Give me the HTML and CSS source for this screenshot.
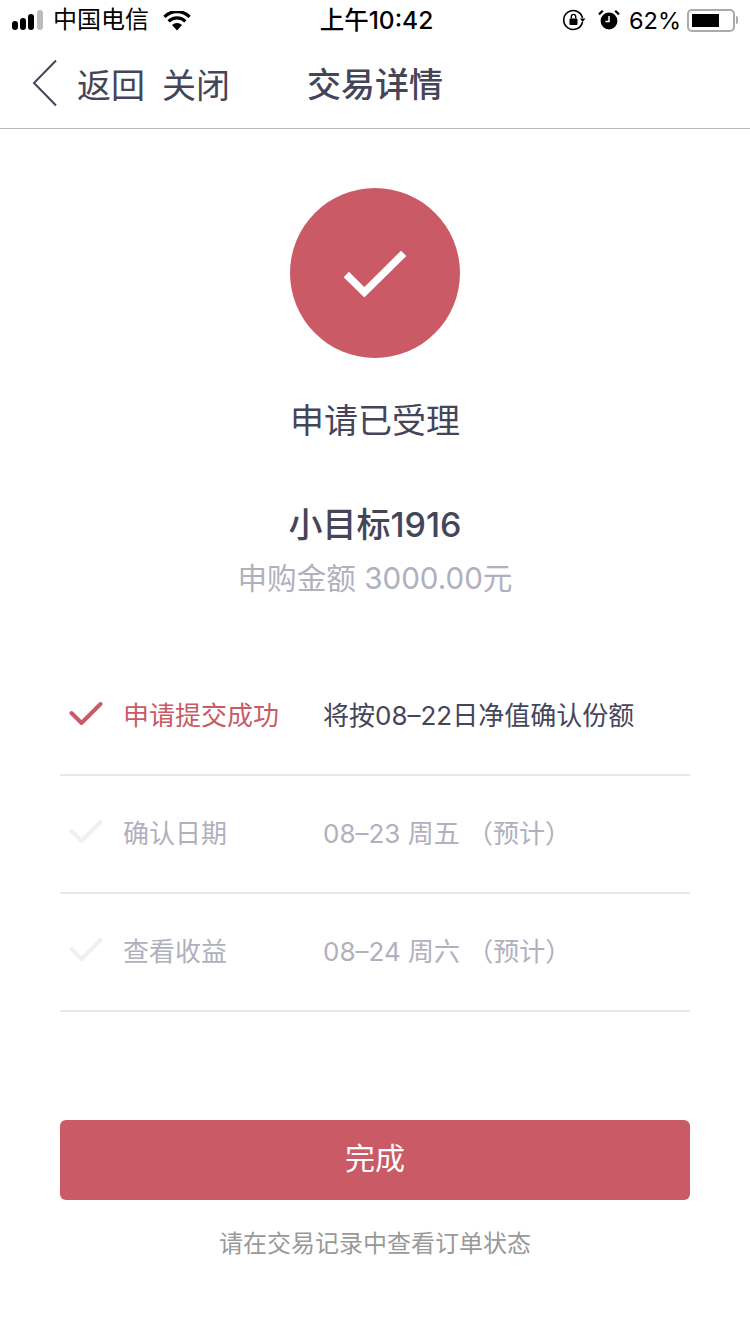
FILE: index.html
```html
<!DOCTYPE html>
<html lang="zh-CN">
<head>
    <meta charset="UTF-8">
    <title>交易详情</title>
    <link rel="stylesheet" href="styles.css">
</head>
<body>
    <div class="status-bar">
        <div class="status-left">
            <div class="signal">
                <span class="dot dot-1"></span>
                <span class="dot dot-2"></span>
                <span class="dot dot-3"></span>
                <span class="dot dot-4"></span>
            </div>
            <span class="carrier">中国电信</span>
            <svg class="wifi" width="28" height="20" viewBox="0 0 28 20">
                <path d="M14 19.500 L9 14 A7.500 7.500 0 0 1 19 14 Z" fill="#000"/>
                <path d="M5.600 10.400 A12 12 0 0 1 22.400 10.400" fill="none" stroke="#000" stroke-width="3.200"/>
                <path d="M1.400 5.800 A18 18 0 0 1 26.600 5.800" fill="none" stroke="#000" stroke-width="3.200"/>
            </svg>
        </div>
        <div class="status-time">上午10:42</div>
        <div class="status-right">
            <svg class="lock" width="24" height="24" viewBox="0 0 24 24">
                <path d="M20.500 14 A9.500 9.500 0 1 1 20.500 10" fill="none" stroke="#000" stroke-width="1.600"/>
                <path d="M18 10.500 L23.500 10.500 L20.600 14 Z" fill="#000"/>
                <rect x="7.500" y="10.500" width="8" height="6.500" rx="1" fill="#000"/>
                <path d="M9.300 10.500 V8.600 A2.200 2.200 0 0 1 13.700 8.600 V10.500" fill="none" stroke="#000" stroke-width="1.400"/>
            </svg>
            <svg class="alarm" width="22" height="22" viewBox="0 0 22 22">
                <circle cx="11" cy="12" r="8.400" fill="#000"/>
                <path d="M11 7 V12.400 H7.400" fill="none" stroke="#fff" stroke-width="1.500"/>
                <path d="M1 5.400 L4.800 1.800 M21 5.400 L17.200 1.800" stroke="#000" stroke-width="2.200"/>
            </svg>
            <span class="battery-text">62%</span>
            <div class="battery"><div class="battery-level"></div></div>
            <div class="battery-tip"></div>
        </div>
    </div>

    <div class="nav-bar">
        <svg class="back-icon" width="26" height="48" viewBox="0 0 26 48">
            <path d="M24 1.500 L2 24 L24 46.500" fill="none" stroke="#45455a" stroke-width="2"/>
        </svg>
        <span class="nav-link">返回</span>
        <span class="nav-link nav-close">关闭</span>
        <h1 class="nav-title">交易详情</h1>
    </div>

    <div class="result-head">
        <div class="success-circle">
            <svg width="64" height="50" viewBox="0 0 64 50">
                <path d="M3.300 26.500 L21.300 44.300 L60.700 5.300" fill="none" stroke="#fff" stroke-width="7.500"/>
            </svg>
        </div>
        <div class="result-text">申请已受理</div>
        <div class="product-name">小目标1916</div>
        <div class="product-amount">申购金额 3000.00元</div>
    </div>

    <div class="steps">
        <div class="step step-done">
            <svg class="step-icon" width="34" height="26" viewBox="0 0 34 26">
                <path d="M2.500 12 L12.500 22 L31.500 3" fill="none" stroke="#c95a66" stroke-width="4" stroke-linecap="round" stroke-linejoin="round"/>
            </svg>
            <span class="step-name">申请提交成功</span>
            <span class="step-info">将按08–22日净值确认份额</span>
        </div>
        <div class="step">
            <svg class="step-icon" width="34" height="26" viewBox="0 0 34 26">
                <path d="M2.500 12 L12.500 22 L31.500 3" fill="none" stroke="#f0f0f0" stroke-width="4" stroke-linecap="round" stroke-linejoin="round"/>
            </svg>
            <span class="step-name">确认日期</span>
            <span class="step-info">08–23 周五 （预计）</span>
        </div>
        <div class="step">
            <svg class="step-icon" width="34" height="26" viewBox="0 0 34 26">
                <path d="M2.500 12 L12.500 22 L31.500 3" fill="none" stroke="#f0f0f0" stroke-width="4" stroke-linecap="round" stroke-linejoin="round"/>
            </svg>
            <span class="step-name">查看收益</span>
            <span class="step-info">08–24 周六 （预计）</span>
        </div>
    </div>

    <button class="done-btn">完成</button>
    <p class="tip">请在交易记录中查看订单状态</p>
</body>
</html>
```

FILE: styles.css
```css
* {
    margin: 0;
    padding: 0;
    box-sizing: border-box;
}

body {
    width: 750px;
    height: 1334px;
    overflow: hidden;
    background: #fff;
    font-family: Inter, "Noto Sans CJK SC", sans-serif;
    color: #45455a;
}

/* 状态栏 */
.status-bar {
    height: 40px;
    display: flex;
    align-items: center;
    justify-content: space-between;
    color: #000;
    font-size: 24px;
    position: relative;
}

.status-left {
    display: flex;
    align-items: center;
    padding-left: 12px;
}

.signal {
    display: flex;
    align-items: flex-end;
    gap: 2px;
    width: 34px;
    height: 20px;
    margin-top: -1px;
}

.dot {
    width: 6px;
    background: #000;
    border-radius: 3px;
}

.dot-1 { height: 9px; }
.dot-2 { height: 12px; }
.dot-3 { height: 16px; }
.dot-4 { height: 20px; background: #bbb; margin-left: 1px; }

.carrier {
    margin-left: 7px;
    line-height: 40px;
}

.wifi {
    margin-left: 14px;
    margin-top: 2px;
}

.status-time {
    position: absolute;
    left: 0;
    right: 0;
    padding-left: 3px;
    text-align: center;
    font-size: 24.5px;
    font-weight: 500;
    line-height: 40px;
    pointer-events: none;
}

.status-right {
    display: flex;
    align-items: center;
    padding-right: 12px;
}

.alarm {
    margin-left: 12px;
}

.battery-text {
    margin-left: 9px;
    font-size: 23.5px;
}

.battery {
    width: 48px;
    height: 23px;
    margin-left: 6px;
    padding: 3px;
    border: 2px solid #aaa;
    border-radius: 5px;
}

.battery-level {
    width: 27px;
    height: 100%;
    background: #000;
}

.battery-tip {
    width: 2px;
    height: 8px;
    margin-left: 1px;
    background: #aaa;
    border-radius: 0 2px 2px 0;
}

/* 导航栏 */
.nav-bar {
    height: 89px;
    display: flex;
    align-items: center;
    position: relative;
    border-bottom: 1px solid #b8b8b8;
    padding-left: 32px;
    padding-bottom: 3px;
}

.back-icon {
    flex: none;
}

.nav-link {
    font-size: 34px;
    line-height: 40px;
    margin-left: 19px;
    margin-top: 6px;
}

.nav-close {
    margin-left: 17px;
}

.nav-title {
    position: absolute;
    left: 0;
    right: 0;
    top: 0;
    text-align: center;
    font-size: 34px;
    font-weight: 500;
    line-height: 90px;
}

/* 结果 */
.result-head {
    display: flex;
    flex-direction: column;
    align-items: center;
    padding-top: 59px;
}

.success-circle {
    width: 170px;
    height: 170px;
    border-radius: 50%;
    background: #c95a66;
    display: flex;
    align-items: center;
    justify-content: center;
}

.result-text {
    font-size: 34px;
    line-height: 44px;
    margin-top: 41px;
}

.product-name {
    font-size: 34px;
    font-weight: 500;
    line-height: 46px;
    margin-top: 59px;
}

.product-amount {
    font-size: 29.6px;
    line-height: 40px;
    margin-top: 10px;
    color: #b0b0be;
}

/* 步骤 */
.steps {
    margin: 60px 60px 0;
}

.step {
    height: 118px;
    display: flex;
    align-items: center;
    border-bottom: 2px solid #e6e6ee;
    padding-bottom: 6px;
    font-size: 26px;
    color: #b0b0be;
}

.step-icon {
    flex: none;
    margin-left: 9px;
    margin-top: 2px;
}

.step-name {
    width: 200px;
    margin-left: 20px;
}

.step-info {
    white-space: nowrap;
}

.step-done .step-name {
    color: #c95a66;
}

.step-done .step-info {
    color: #45455a;
}

/* 按钮 */
.done-btn {
    display: block;
    width: 630px;
    height: 80px;
    margin: 108px auto 0;
    padding-bottom: 8px;
    background: #c95a66;
    color: #fff;
    border: none;
    border-radius: 6px;
    font-family: inherit;
    font-size: 30px;
}

.tip {
    margin-top: 24px;
    text-align: center;
    font-size: 24px;
    line-height: 40px;
    color: #999;
}
```
